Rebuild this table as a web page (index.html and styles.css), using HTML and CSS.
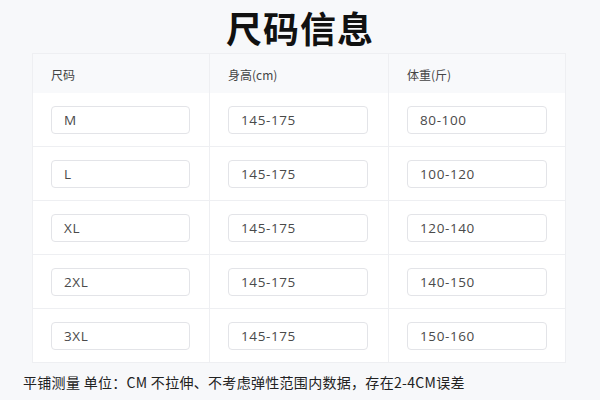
FILE: index.html
```html
<!DOCTYPE html>
<html lang="zh-CN">
<head>
<meta charset="utf-8">
<title>尺码信息</title>
<link rel="stylesheet" href="styles.css">
</head>
<body>
<div class="page">
  <h1 class="title">尺码信息</h1>
  <div class="table">
    <div class="row head">
      <div class="cell">尺码</div>
      <div class="cell">身高(cm)</div>
      <div class="cell">体重(斤)</div>
    </div>
    <div class="row">
      <div class="cell"><div class="input">M</div></div>
      <div class="cell"><div class="input">145-175</div></div>
      <div class="cell"><div class="input">80-100</div></div>
    </div>
    <div class="row">
      <div class="cell"><div class="input">L</div></div>
      <div class="cell"><div class="input">145-175</div></div>
      <div class="cell"><div class="input">100-120</div></div>
    </div>
    <div class="row">
      <div class="cell"><div class="input">XL</div></div>
      <div class="cell"><div class="input">145-175</div></div>
      <div class="cell"><div class="input">120-140</div></div>
    </div>
    <div class="row">
      <div class="cell"><div class="input">2XL</div></div>
      <div class="cell"><div class="input">145-175</div></div>
      <div class="cell"><div class="input">140-150</div></div>
    </div>
    <div class="row last">
      <div class="cell"><div class="input">3XL</div></div>
      <div class="cell"><div class="input">145-175</div></div>
      <div class="cell"><div class="input">150-160</div></div>
    </div>
  </div>
  <p class="note">平铺测量 单位：CM 不拉伸、不考虑弹性范围内数据，存在2-4CM误差</p>
</div>
</body>
</html>
```

FILE: styles.css
```css
* { box-sizing: border-box; }
html, body {
  margin: 0;
  padding: 0;
  background: #f7f8fa;
  width: 600px;
  height: 400px;
  overflow: hidden;
  font-family: "Open Sans", "Noto Sans CJK SC", sans-serif;
  color: #333;
}
.page {
  padding-top: 6px;
}
.title {
  margin: 0;
  height: 47px;
  text-align: center;
  font-family: "Noto Sans CJK SC", sans-serif;
  font-weight: 700;
  font-size: 36px;
  line-height: 42px;
  color: #111;
  letter-spacing: 1px;
}
.table {
  margin-left: 32px;
  width: 534px;
  border: 1px solid #eeeff2;
  background: #fff;
}
.row {
  display: grid;
  grid-template-columns: 177px 179px 1fr;
  height: 54px;
  border-bottom: 1px solid #eeeff2;
}
.row.last { border-bottom: none; height: 53px; }
.row.head {
  height: 39px;
  background: #f8f9fb;
  border-bottom: none;
}
.cell {
  display: flex;
  align-items: center;
  padding: 0 19px 0 18px;
  border-right: 1px solid #eeeff2;
}
.cell:last-child { border-right: none; }
.head .cell {
  font-family: "Noto Sans CJK SC", sans-serif;
  font-size: 12px;
  color: #444;
  padding-top: 2px;
}
.input {
  width: 140px;
  height: 28px;
  border: 1px solid #e3e4e8;
  border-radius: 4px;
  padding-left: 12px;
  display: flex;
  align-items: center;
  font-size: 13.5px;
  color: #4a4a4a;
  letter-spacing: 0.6px;
  background: #fff;
}
.note {
  margin: 9px 0 0 23px;
  font-family: "Noto Sans CJK SC", sans-serif;
  font-size: 14px;
  line-height: 20px;
  color: #222;
  letter-spacing: 0.3px;
}
```
